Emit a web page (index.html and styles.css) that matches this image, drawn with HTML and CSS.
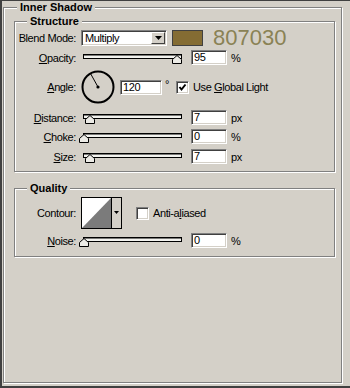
FILE: index.html
```html
<!DOCTYPE html>
<html lang="en">
<head>
  <meta charset="UTF-8" />
  <title>Inner Shadow</title>
  <link rel="stylesheet" href="styles.css">
</head>
<body>
  <fieldset class="group outer">
    <legend>Inner Shadow</legend>

    <!-- Structure section -->
    <fieldset class="group structure">
      <legend>Structure</legend>

      <div class="row row-blend">
        <span class="label">Blend Mode:</span>
        <div class="select">
          <span class="select-text">Multiply</span>
          <span class="select-btn">
            <svg width="7" height="4" viewBox="0 0 7 4"><polygon points="0,0 7,0 3.5,4" fill="#000"/></svg>
          </span>
        </div>
        <span class="swatch"></span>
        <span class="hex">807030</span>
      </div>

      <div class="row">
        <span class="label"><u>O</u>pacity:</span>
        <svg class="slider" width="105" height="15" viewBox="0 0 105 15">
          <rect x="4.5" y="4.5" width="98" height="4" fill="#f2f2ee" stroke="#000"/>
          <line x1="5" y1="5" x2="102" y2="5" stroke="#000"/>
          <polygon points="98,5.5 102.5,9.5 102.5,13.5 93.5,13.5 93.5,9.5" fill="#ecebe6" stroke="#000"/>
        </svg>
        <span class="field">95</span>
        <span class="unit">%</span>
      </div>

      <div class="row row-angle">
        <span class="label"><u>A</u>ngle:</span>
        <svg class="dial" width="34" height="34" viewBox="0 0 34 34">
          <circle cx="17" cy="17" r="15.5" fill="none" stroke="#000" stroke-width="2"/>
          <line x1="17" y1="17" x2="9.5" y2="3.5" stroke="#000"/>
          <circle cx="17" cy="17" r="1.6" fill="#000"/>
        </svg>
        <span class="field field-wide">120</span>
        <span class="degree">°</span>
        <span class="check check-first">
          <svg width="11" height="11" viewBox="0 0 11 11"><path d="M2.5 5 L4.5 7.5 L8.5 2.5" fill="none" stroke="#000" stroke-width="2"/></svg>
        </span>
        <span class="check-text">Use <u>G</u>lobal Light</span>
      </div>

      <div class="row row-distance">
        <span class="label"><u>D</u>istance:</span>
        <svg class="slider" width="105" height="15" viewBox="0 0 105 15">
          <rect x="4.5" y="4.5" width="98" height="4" fill="#f2f2ee" stroke="#000"/>
          <line x1="5" y1="5" x2="102" y2="5" stroke="#000"/>
          <polygon points="11,5.5 15.5,9.5 15.5,13.5 6.5,13.5 6.5,9.5" fill="#ecebe6" stroke="#000"/>
        </svg>
        <span class="field">7</span>
        <span class="unit">px</span>
      </div>

      <div class="row">
        <span class="label"><u>C</u>hoke:</span>
        <svg class="slider" width="105" height="15" viewBox="0 0 105 15">
          <rect x="4.5" y="4.5" width="98" height="4" fill="#f2f2ee" stroke="#000"/>
          <line x1="5" y1="5" x2="102" y2="5" stroke="#000"/>
          <polygon points="5,5.5 9.5,9.5 9.5,13.5 0.5,13.5 0.5,9.5" fill="#ecebe6" stroke="#000"/>
        </svg>
        <span class="field">0</span>
        <span class="unit">%</span>
      </div>

      <div class="row row-size">
        <span class="label"><u>S</u>ize:</span>
        <svg class="slider" width="105" height="15" viewBox="0 0 105 15">
          <rect x="4.5" y="4.5" width="98" height="4" fill="#f2f2ee" stroke="#000"/>
          <line x1="5" y1="5" x2="102" y2="5" stroke="#000"/>
          <polygon points="11,5.5 15.5,9.5 15.5,13.5 6.5,13.5 6.5,9.5" fill="#ecebe6" stroke="#000"/>
        </svg>
        <span class="field">7</span>
        <span class="unit">px</span>
      </div>
    </fieldset>

    <!-- Quality section -->
    <fieldset class="group quality">
      <legend>Quality</legend>

      <div class="row row-contour">
        <span class="label">Contour:</span>
        <svg class="contour" width="41" height="32" viewBox="0 0 41 32">
          <rect x="0.5" y="0.5" width="40" height="31" fill="#fff" stroke="#000"/>
          <polygon points="1,31 30,1 30,31" fill="#7b7b7b"/>
          <rect x="30.5" y="0.5" width="10" height="31" fill="#d4d0c8" stroke="#000"/>
          <polygon points="33,14 38,14 35.5,17" fill="#000"/>
        </svg>
        <span class="check check-aa"></span>
        <span class="check-text">Anti-a<u>l</u>iased</span>
      </div>

      <div class="row">
        <span class="label"><u>N</u>oise:</span>
        <svg class="slider" width="105" height="15" viewBox="0 0 105 15">
          <rect x="4.5" y="4.5" width="98" height="4" fill="#f2f2ee" stroke="#000"/>
          <line x1="5" y1="5" x2="102" y2="5" stroke="#000"/>
          <polygon points="5,5.5 9.5,9.5 9.5,13.5 0.5,13.5 0.5,9.5" fill="#ecebe6" stroke="#000"/>
        </svg>
        <span class="field">0</span>
        <span class="unit">%</span>
      </div>
    </fieldset>
  </fieldset>
</body>
</html>
```

FILE: styles.css
```css
/* Basic Reset */
* {
  box-sizing: border-box;
}

body {
  margin: 0;
  width: 350px;
  height: 388px;
  padding-left: 1px;
  background-color: #d4d0c8; /* classic dialog grey */
  border-left: 2px solid #404040;
  border-top: 1px solid #404040;
  border-bottom: 2px solid #404040;
  font-family: "Liberation Sans", Arial, sans-serif;
  font-size: 11px;
  letter-spacing: -0.4px;
  color: #000;
  overflow: hidden;
}

u {
  text-decoration-thickness: 1px;
  text-underline-offset: 1px;
}

/* Etched group boxes */
.group {
  margin: 0;
  padding: 0;
  min-width: 0;
  border: 1px solid #808080;
  box-shadow: inset 1px 1px 0 #fff, 1px 1px 0 #fff;
}

.group > legend {
  padding: 0 3px;
  font-weight: bold;
  line-height: 13px;
  letter-spacing: 0;
  background-color: #d4d0c8;
}

.outer {
  width: 339px;
  height: 382px;
}

.outer > legend {
  margin-left: 13px;
}

.structure,
.quality {
  width: 321px;
  margin-left: 10px;
}

.structure {
  margin-top: 1px;
  padding-bottom: 7px;
}

.quality {
  margin-top: 10px;
  padding-bottom: 8px;
}

.structure > legend,
.quality > legend {
  margin-left: 12px;
}

/* Rows */
.row {
  display: flex;
  align-items: center;
  height: 15px;
  margin-top: 4px;
}

.row-blend {
  height: 16px;
  margin-top: 2px;
}

.row-angle {
  height: 34px;
  margin-top: 5px;
}

.row-distance {
  margin-top: 6px;
}

.row-size {
  margin-top: 5px;
}

.row-contour {
  height: 32px;
  margin-top: 2px;
}

.label {
  flex: none;
  width: 61px;
  margin-right: 5px;
  text-align: right;
}

/* Sunken controls */
.select,
.field,
.check {
  background-color: #fff;
  border: 1px solid;
  border-color: #808080 #fff #fff #808080;
  box-shadow: inset 1px 1px 0 #404040, inset -1px -1px 0 #d4d0c8;
}

.select {
  display: flex;
  align-items: center;
  width: 86px;
  height: 16px;
  padding: 1px;
}

.select-text {
  flex: 1;
  padding-left: 2px;
  line-height: 12px;
}

.select-btn {
  display: flex;
  align-items: center;
  justify-content: center;
  width: 14px;
  height: 12px;
  background-color: #d4d0c8;
  border: 1px solid;
  border-color: #fff #404040 #404040 #fff;
}

.swatch {
  width: 31px;
  height: 16px;
  margin-left: 5px;
  background-color: #846c33;
  border: 1px solid #404040;
}

.hex {
  margin-left: 10px;
  font-size: 22px;
  line-height: 16px;
  letter-spacing: 0;
  color: #8a8255;
}

.slider {
  flex: none;
  margin-left: -2px;
}

.field {
  width: 36px;
  height: 15px;
  margin-left: 7px;
  padding-left: 2px;
  line-height: 13px;
}

.field-wide {
  width: 42px;
  margin-left: 5px;
}

.unit {
  margin-left: 4px;
}

.degree {
  align-self: flex-start;
  margin-top: 8px;
  margin-left: 3px;
}

.check {
  display: flex;
  align-items: center;
  justify-content: center;
  width: 13px;
  height: 13px;
}

.check-first {
  margin-left: 7px;
}

.check-aa {
  margin-left: 14px;
}

.check-text {
  margin-left: 4px;
}

.dial,
.contour {
  flex: none;
}
```
